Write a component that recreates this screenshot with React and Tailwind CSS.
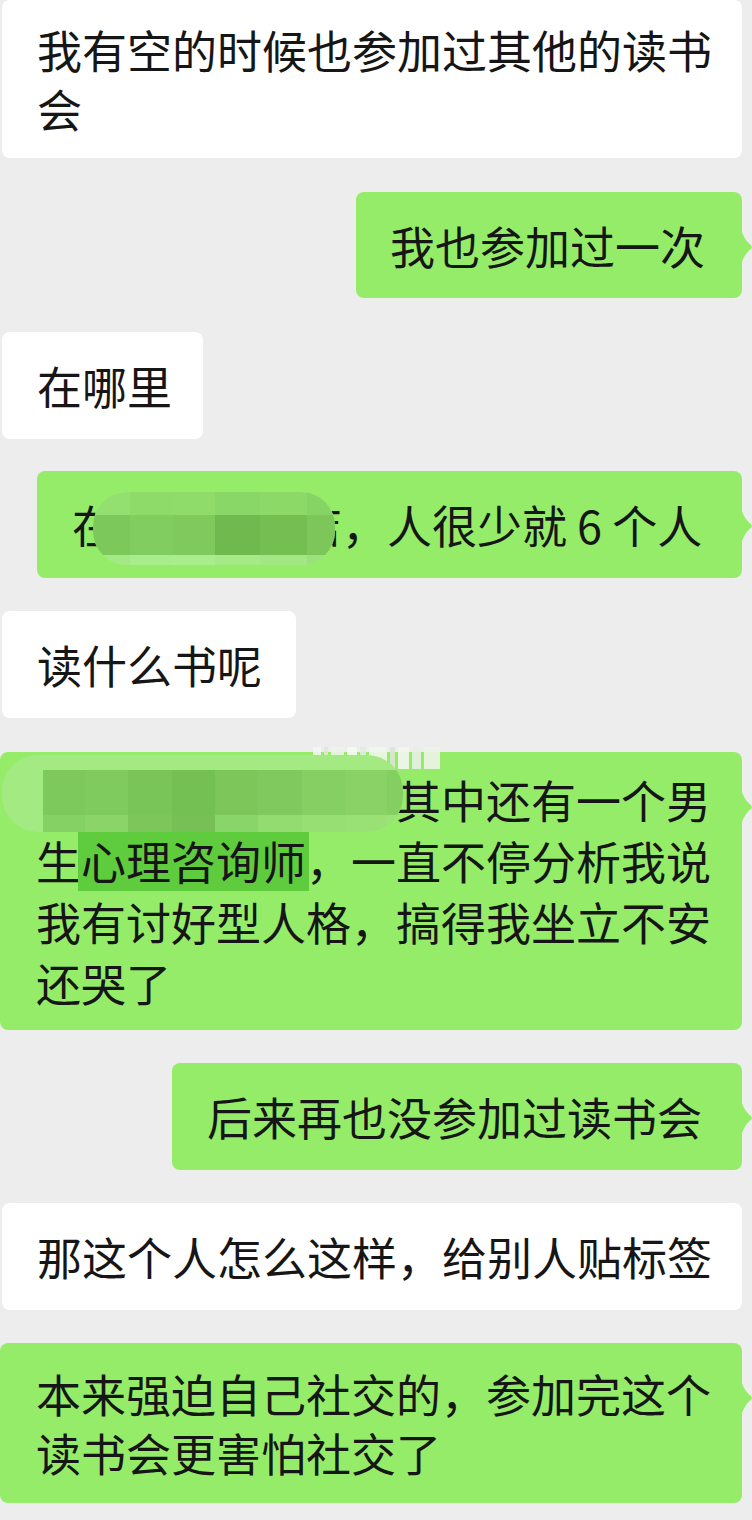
import React from "react";

const GREEN = "bg-[#95ec69]";

const Tail = () => (
  <svg
    className="absolute left-full top-[40px]"
    width="10"
    height="30"
    viewBox="0 0 10 30"
  >
    <path
      d="M0 0 C2 6 5 10 9.2 13.6 Q10.2 15 9.2 16.4 C5 20 2 24 0 30 Z"
      fill="#95ec69"
    />
  </svg>
);

const Bubble = ({ me, className = "", children }) => (
  <div
    className={`relative rounded-[8px] ${me ? GREEN : "bg-white"} ${className}`}
  >
    {children}
    {me && <Tail />}
  </div>
);

// mosaic blob over the place name
const PlaceBlur = () => (
  <div className="absolute left-[56px] top-[21px] h-[73px] w-[242px] overflow-hidden rounded-[34px] bg-[#a6ea87]">
    <div className="grid grid-cols-[37px_43px_42px_45px_47px_28px] grid-rows-[23px_40px_10px]">
      <div className="bg-[#93df6f]" />
      <div className="bg-[#8edb6a]" />
      <div className="bg-[#8fdc6b]" />
      <div className="bg-[#89d766]" />
      <div className="bg-[#8cd968]" />
      <div className="bg-[#86d463]" />
      <div className="bg-[#7cc85a]" />
      <div className="bg-[#82cd5f]" />
      <div className="bg-[#7fc95d]" />
      <div className="bg-[#6fb94e]" />
      <div className="bg-[#75be52]" />
      <div className="bg-[#7cc65a]" />
      <div className="bg-[#a4e986]" />
      <div className="bg-[#a8ec8b]" />
      <div className="bg-[#aaed8d]" />
      <div className="bg-[#a6ea88]" />
      <div className="bg-[#a2e784]" />
      <div className="bg-[#9be27c]" />
    </div>
  </div>
);

const NameBlur = () => (
  <>
    <div className="absolute left-[313px] top-[-5px] flex h-[22px] w-[127px] items-stretch gap-[3px] opacity-90">
      <div className="w-[8px] bg-[#f3f7f0]" />
      <div className="w-[4px] bg-[#dfe8d8]" />
      <div className="w-[14px] bg-[#eef4ea]" />
      <div className="w-[10px] bg-[#f6f9f4]" />
      <div className="w-[6px] bg-[#e4ecde]" />
      <div className="w-[18px] bg-[#f1f6ee]" />
      <div className="w-[5px] bg-[#dce6d4]" />
      <div className="w-[12px] bg-[#f4f8f1]" />
      <div className="w-[9px] bg-[#e9f0e4]" />
      <div className="w-[16px] bg-[#eef4ea]" />
    </div>
    <div className="absolute left-[2px] top-[3px] h-[77px] w-[401px] overflow-hidden rounded-[36px] bg-[#a3ea82]">
      <div className="ml-[41px] mt-[15px] grid grid-cols-[42px_43px_44px_43px_43px_44px_43px_42px_50px] grid-rows-[45px_17px]">
        <div className="bg-[#7dc95b]" />
        <div className="bg-[#80cb5d]" />
        <div className="bg-[#7ac558]" />
        <div className="bg-[#74c053]" />
        <div className="bg-[#7cc65a]" />
        <div className="bg-[#80c95e]" />
        <div className="bg-[#86cf63]" />
        <div className="bg-[#8ad266]" />
        <div className="bg-[#85cf62]" />
        <div className="bg-[#86d164]" />
        <div className="bg-[#8bd468]" />
        <div className="bg-[#7cc65a]" />
        <div className="bg-[#76c055]" />
        <div className="bg-[#8ad569]" />
        <div className="bg-[#93dc6f]" />
        <div className="bg-[#97df73]" />
        <div className="bg-[#99e075]" />
        <div className="bg-[#9be377]" />
      </div>
    </div>
  </>
);

export default function App() {
  return (
    <div className="h-[1520px] w-[752px] overflow-hidden bg-[#ededed] font-['Noto_Sans_CJK_SC',sans-serif] text-[45px] text-[#161616]">
      <div className="flex flex-col">
        <Bubble className="ml-[2px] w-[740px] pb-[20px] pl-[35px] pt-[20px] leading-[59px]">
          <div className="whitespace-nowrap">我有空的时候也参加过其他的读书</div>
          <div>会</div>
        </Bubble>

        <Bubble me className="mr-[10px] mt-[34px] w-[386px] self-end pb-[23px] pl-[34px] pt-[24px] leading-[59px]">
          <div className="whitespace-nowrap">我也参加过一次</div>
        </Bubble>

        <Bubble className="ml-[2px] mt-[34px] w-[201px] py-[24px] pl-[35px] leading-[59px]">
          <div className="whitespace-nowrap">在哪里</div>
        </Bubble>

        <Bubble me className="mr-[10px] mt-[32px] w-[705px] self-end py-[24px] pl-[35px] leading-[59px]">
          <div className="whitespace-nowrap">在某某某某店，人很少就 6 个人</div>
          <PlaceBlur />
        </Bubble>

        <Bubble className="ml-[2px] mt-[33px] w-[294px] py-[24px] pl-[35px] leading-[59px]">
          <div className="whitespace-nowrap">读什么书呢</div>
        </Bubble>

        <Bubble me className="mr-[10px] mt-[34px] w-[742px] self-end py-[17px] pl-[36px] leading-[61px]">
          <div className="whitespace-nowrap">读的是《某某某》其中还有一个男</div>
          <div className="whitespace-nowrap">
            生<span className="-mx-[3px] inline-block bg-[#5fcc3e] px-[3px]">心理咨询师</span>，一直不停分析我说
          </div>
          <div className="whitespace-nowrap">我有讨好型人格，搞得我坐立不安</div>
          <div>还哭了</div>
          <NameBlur />
        </Bubble>

        <Bubble me className="mr-[10px] mt-[33px] w-[570px] self-end py-[24px] pl-[35px] leading-[59px]">
          <div className="whitespace-nowrap">后来再也没参加过读书会</div>
        </Bubble>

        <Bubble className="ml-[2px] mt-[33px] w-[740px] py-[24px] pl-[35px] leading-[59px]">
          <div className="whitespace-nowrap">那这个人怎么这样，给别人贴标签</div>
        </Bubble>

        <Bubble me className="mr-[10px] mt-[33px] w-[742px] self-end py-[21px] pl-[36px] leading-[59px]">
          <div className="whitespace-nowrap">本来强迫自己社交的，参加完这个</div>
          <div>读书会更害怕社交了</div>
        </Bubble>
      </div>
    </div>
  );
}
